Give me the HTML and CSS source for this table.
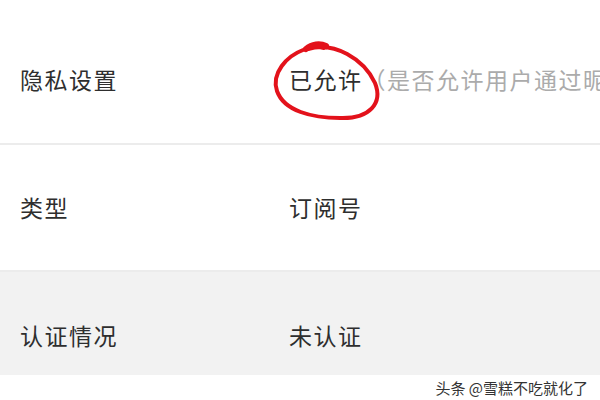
FILE: index.html
```html
<!DOCTYPE html>
<html lang="zh-CN">
<head>
<meta charset="utf-8">
<link rel="stylesheet" href="styles.css">
</head>
<body>
<div class="page">
  <div class="row row-privacy">
    <div class="label">隐私设置</div>
    <div class="value">
      <span class="strong">已允许</span><span class="hint">（是否允许用户通过昵称搜索到本帐号）</span>
      <svg class="mark" width="120" height="90" viewBox="0 0 120 90">
        <path d="M38 12 C64 4 94 22 105 46 C113 66 100 82 70 81 C42 81 14 74 7 54 C1 36 17 19 33 13 C40 10 47 9 54 11" fill="none" stroke="#e3121b" stroke-width="4" stroke-linecap="round"/>
        <path d="M36 12 C42 7 50 6 56 9" fill="none" stroke="#e3121b" stroke-width="6" stroke-linecap="round"/>
      </svg>
    </div>
  </div>
  <div class="divider"></div>
  <div class="row row-type">
    <div class="label">类型</div>
    <div class="value"><span class="strong">订阅号</span></div>
  </div>
  <div class="divider"></div>
  <div class="row row-auth">
    <div class="label">认证情况</div>
    <div class="value"><span class="strong">未认证</span></div>
  </div>
  <div class="footer">
    <span class="watermark">头条 @雪糕不吃就化了</span>
  </div>
</div>
</body>
</html>
```

FILE: styles.css
```css
html, body {
  margin: 0;
  padding: 0;
  background: #ffffff;
}
.page {
  width: 600px;
  height: 400px;
  overflow: hidden;
  font-family: "Noto Sans CJK SC", "Noto Sans", sans-serif;
  color: #2e2e2e;
}
.row {
  display: flex;
  align-items: flex-start;
  box-sizing: border-box;
  font-size: 23px;
  line-height: 24px;
  letter-spacing: 1.5px;
}
.row-privacy {
  height: 143px;
  padding-top: 67px;
}
.row-type {
  height: 125px;
  padding-top: 50px;
}
.row-auth {
  height: 103px;
  padding-top: 51px;
  background: #f2f2f2;
}
.label {
  width: 269px;
  padding-left: 20px;
  flex: none;
}
.value {
  position: relative;
  flex: 1;
  white-space: nowrap;
  overflow: visible;
}
.strong {
  color: #2e2e2e;
}
.hint {
  color: #ababab;
}
.divider {
  height: 2px;
  background: #ececec;
}
.mark {
  position: absolute;
  left: -19px;
  top: -30px;
}
.footer {
  height: 25px;
  display: flex;
  justify-content: flex-end;
  align-items: center;
  padding-right: 12px;
}
.watermark {
  font-size: 15px;
  line-height: 18px;
  color: #333333;
}
```
